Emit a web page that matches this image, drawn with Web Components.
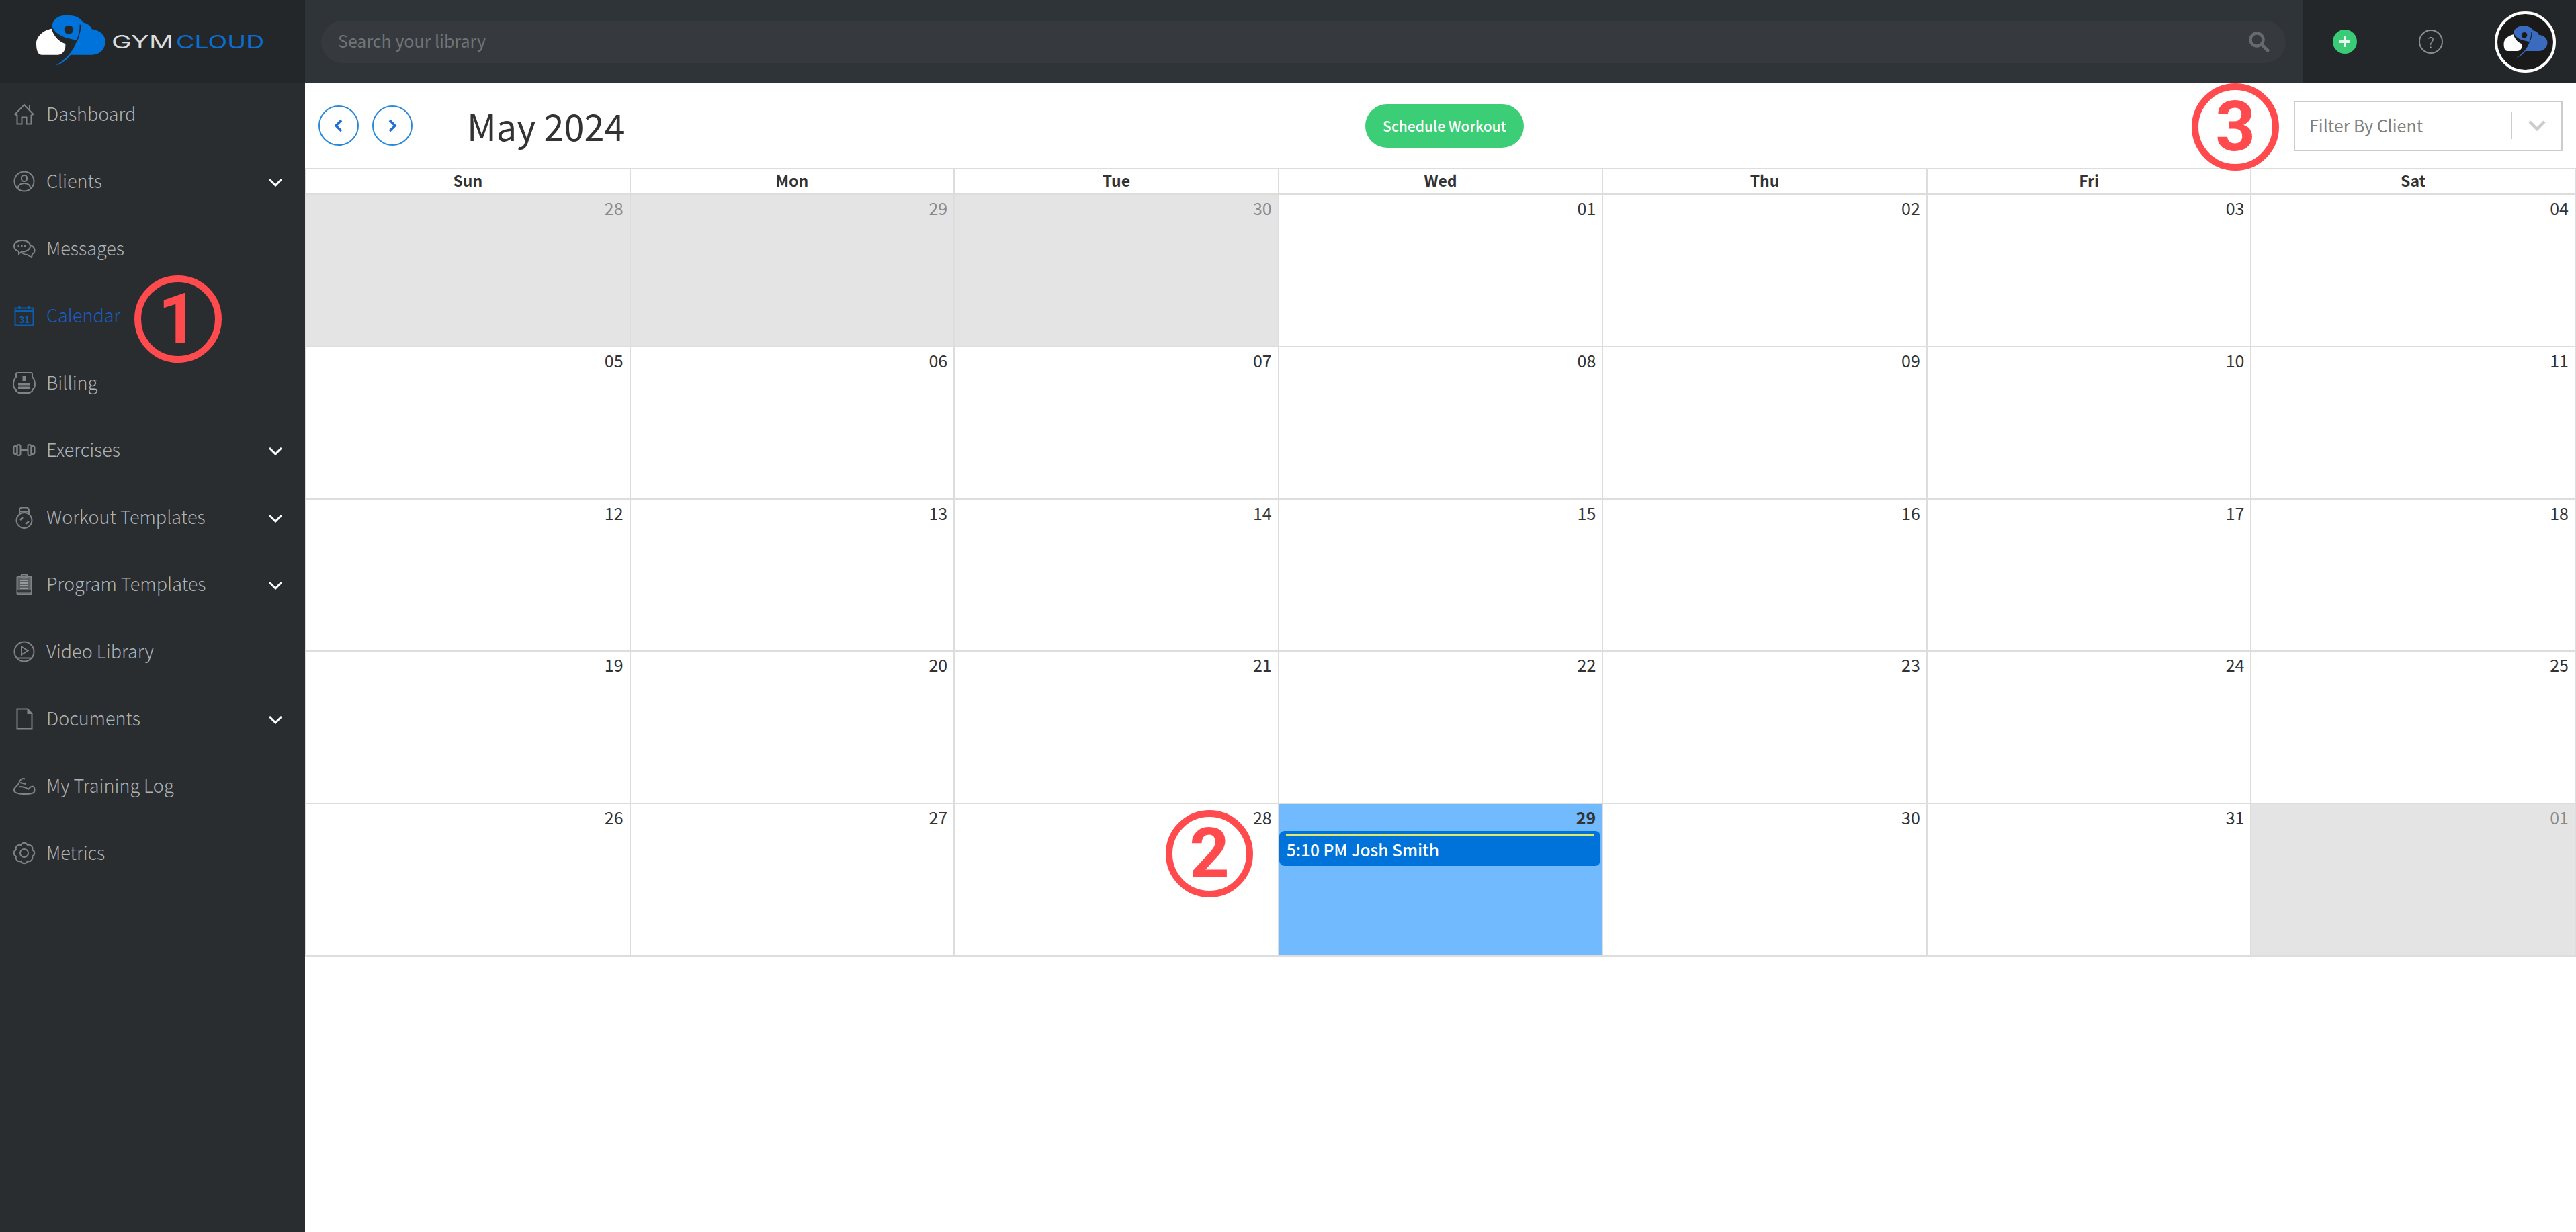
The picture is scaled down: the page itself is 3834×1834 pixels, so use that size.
<!DOCTYPE html>
<html lang="en">
<head>
<meta charset="utf-8">
<title>GymCloud Calendar</title>
<style>
html,body{margin:0;padding:0;background:#fff}
body{font-family:"Noto Sans CJK JP","Source Sans Pro","Noto Sans",sans-serif;color:#333}
</style>
</head>
<body>
<gc-app>
  <gc-topbar slot="top"></gc-topbar>
  <gc-sidebar slot="side">
    <gc-nav icon="home" label="Dashboard"></gc-nav>
    <gc-nav icon="user" label="Clients" chevron></gc-nav>
    <gc-nav icon="chat" label="Messages"></gc-nav>
    <gc-nav icon="calendar" label="Calendar" active></gc-nav>
    <gc-nav icon="billing" label="Billing"></gc-nav>
    <gc-nav icon="dumbbell" label="Exercises" chevron></gc-nav>
    <gc-nav icon="kettle" label="Workout Templates" chevron></gc-nav>
    <gc-nav icon="clipboard" label="Program Templates" chevron></gc-nav>
    <gc-nav icon="video" label="Video Library"></gc-nav>
    <gc-nav icon="doc" label="Documents" chevron></gc-nav>
    <gc-nav icon="arm" label="My Training Log"></gc-nav>
    <gc-nav icon="gear" label="Metrics"></gc-nav>
  </gc-sidebar>
  <gc-main slot="main"></gc-main>
  <gc-marker slot="over" n="1" x="200" y="410"></gc-marker>
  <gc-marker slot="over" n="2" x="1735" y="1206"></gc-marker>
  <gc-marker slot="over" n="3" x="3262" y="124"></gc-marker>
</gc-app>
<script>
const FONT='"Noto Sans CJK JP","Noto Sans",sans-serif';
const mark=(blue,white,hole)=>`
  <path fill="${white}" d="M110,98 C118,122 132,150 172,166 C174,190 165,212 140,215 L65,215 C50,215 42,195 42,165 C42,130 75,105 110,98 Z"/>
  <path fill="${blue}" d="M112,85 C118,50 150,36 185,38 C215,38 240,50 250,70 C270,75 285,85 290,100 C325,105 350,125 350,155 C350,190 325,215 290,215 L195,215 C175,240 155,255 130,262 C175,235 208,198 224,150 C205,145 185,143 165,135 C140,125 120,110 112,85 Z"/>
  <circle cx="187" cy="103" r="20" fill="${hole}"/>
  <path fill="none" stroke="${hole}" stroke-width="5" d="M238,80 C240,105 232,130 224,150"/>`;

const ICONS={
home:`<path d="M6.5,20 L20,6 L33.5,20 L30.5,21.5 V34.5 H23.5 V24.5 H16.5 V34.5 H9.5 V21.5 Z"/><path d="M28,12 V7"/>`,
user:`<circle cx="20" cy="20" r="14.5"/><rect x="16" y="11" width="8" height="9" rx="3.5"/><path d="M10.5,31 C11,25 15,23 20,23 C25,23 29,25 29.5,31"/>`,
chat:`<path d="M17,8 C10,8 5,11 5,16 C5,20 8,23 12,24 L12,27.5 L16,24.8 C23,25 29,21 29,16 C29,11 24,8 17,8Z"/><path d="M30,15 C34,17 36,20 35.5,24 C35,26 33.5,27.5 32,28 L31,33 L25,29 C22,29 19.5,28.3 17.5,27"/><path stroke-dasharray="2.5 2" d="M10.5,16 H24"/>`,
calendar:`<rect x="6.5" y="8.5" width="27" height="26"/><path stroke-width="3" d="M6.5,13.5 H33.5"/><path stroke-width="3" d="M13,5 V10 M27,5 V10"/><text x="20.5" y="30.5" text-anchor="middle" font-size="13" font-weight="700" fill="#0b5fb0" stroke="none" font-family='${FONT}'>31</text>`,
billing:`<path d="M10,5 H30 Q32,5 32,7 V11 C35,14 36,18 36,22 C36,26 34,29 32,30 V32 L28,35 H12 L8,32 V30 C6,29 4,26 4,22 C4,18 5,14 8,11 V7 Q8,5 10,5Z"/><rect x="17.5" y="10" width="5" height="7" fill="#7f8386" stroke="none"/><rect x="11" y="20" width="18" height="3.5" fill="#7f8386" stroke="none"/><rect x="11" y="25.5" width="18" height="3.5" fill="#7f8386" stroke="none"/>`,
dumbbell:`<rect x="4.5" y="14" width="5" height="12" rx="2.5"/><rect x="9.5" y="12" width="5" height="16" rx="2.5"/><rect x="25.5" y="12" width="5" height="16" rx="2.5"/><rect x="30.5" y="14" width="5" height="12" rx="2.5"/><path stroke-width="3.5" d="M14.5,20 H25.5"/>`,
kettle:`<circle cx="20" cy="24.5" r="11.5"/><path d="M13,16 V10 Q13,5.5 17,5.5 H23 Q27,5.5 27,10 V16"/><path d="M13,11.5 H27"/><path stroke-width="2.5" d="M14,24 L18,20 M22,30 L27,26"/>`,
clipboard:`<rect x="9.5" y="8.5" width="21" height="26" rx="1" fill="#5c6063"/><path stroke="#999" d="M14,14 H26 M14,18 H26 M14,22 H26 M14,26 H26"/><path stroke="#34383b" d="M10,30 H30"/><rect x="15.5" y="5.5" width="9" height="5" rx="2"/>`,
video:`<circle cx="20" cy="20" r="14.5"/><path d="M16,12.5 L25.5,18.5 L16,24.5 Z"/><path d="M10,29.5 H30"/>`,
doc:`<path d="M9.5,5.5 H25 L31.5,12.5 V34.5 H9.5 Z"/><path fill="#7f8386" stroke="none" d="M24.5,6 L31.5,13 H24.5 Z"/>`,
arm:`<path d="M21,9.5 C17,8 13,11 12,16 C10,21 4,22 5,27 C6,31.5 14,32 22,32 C30,32 36,31 35.5,26 C35.5,22.5 34,20.5 32,20.5 C29.5,20.5 28.5,23 26,25 C23,22 18,21 12,21"/><path d="M14,15 L22,17"/>`,
gear:`<path d="M32,15 A5.5,5.5 0 0 1 32,25 A5.5,5.5 0 0 1 25,32 A5.5,5.5 0 0 1 15,32 A5.5,5.5 0 0 1 8,25 A5.5,5.5 0 0 1 8,15 A5.5,5.5 0 0 1 15,8 A5.5,5.5 0 0 1 25,8 A5.5,5.5 0 0 1 32,15 Z"/><circle cx="20" cy="20" r="6"/>`
};

class Base extends HTMLElement{
  render(html){ this.attachShadow({mode:'open'}).innerHTML=html; }
}

customElements.define('gc-app',class extends Base{
  constructor(){super();this.render(`<style>
    :host{display:grid;position:relative;width:3834px;height:1834px;overflow:hidden;
      grid-template-columns:454px 1fr;grid-template-rows:124px 1fr;font-family:${FONT}}
    .top{grid-column:1/3}
    .side{background:#292d30}
    .main{min-width:0}
  </style>
  <div class="top"><slot name="top"></slot></div>
  <div class="side"><slot name="side"></slot></div>
  <div class="main"><slot name="main"></slot></div>
  <slot name="over"></slot>`);}
});

customElements.define('gc-logo',class extends Base{
  constructor(){super();this.render(`<style>:host{display:block;width:370px;height:100px}svg{display:block}</style>
  <svg width="370" height="100" viewBox="0 0 1110 300" role="img" aria-label="GymCloud">${mark('#0073da','#ffffff','#23272a')}
    <text y="186" font-family="Inter,sans-serif" font-size="80" font-weight="400"><tspan x="378" fill="#dcdcdc" textLength="276" lengthAdjust="spacingAndGlyphs">GYM</tspan><tspan x="666" fill="#0a6fd0" textLength="394" lengthAdjust="spacingAndGlyphs">CLOUD</tspan></text>
  </svg>`);}
});

customElements.define('gc-topbar',class extends Base{
  constructor(){super();this.render(`<style>
    :host{display:flex;height:124px;background:#2f3438}
    .brand{width:454px;flex:none;background:#23272a;box-sizing:border-box;padding:10px 0 0 40px}
    .search{flex:1;min-width:0;display:flex;align-items:center;padding:0 26px 0 24px}
    .actions{width:406px;flex:none;background:#23272a;display:flex;align-items:center;position:relative;box-sizing:border-box;padding-left:44px}
    .plus{width:36px;height:36px;border-radius:50%;background:#39cb75;display:grid;place-items:center;margin-top:-1px}
    .help{width:36px;height:36px;border-radius:50%;border:2px solid #8a8d8f;box-sizing:border-box;margin-left:92px;
      display:grid;place-items:center;color:#9a9da0;font-size:22px;line-height:1;font-weight:300}
    .avatar{margin-left:77px;width:91px;height:91px;box-sizing:border-box;border-radius:50%;border:4px solid #fff;background:#1a1a1a;display:grid;place-items:center}
  </style>
  <div class="brand"><gc-logo></gc-logo></div>
  <div class="search"><gc-search></gc-search></div>
  <div class="actions">
    <div class="plus"><svg width="18" height="18" viewBox="0 0 18 18"><path d="M9,1 V17 M1,9 H17" stroke="#e8f8ee" stroke-width="4"/></svg></div>
    <div class="help">?</div>
    <div class="avatar"><svg width="70" height="54" viewBox="30 26 332 246">${mark('#3b6bbf','#ffffff','#1a1a1a')}</svg></div>
  </div>`);}
});

customElements.define('gc-search',class extends Base{
  constructor(){super();this.render(`<style>
    :host{display:flex;align-items:center;width:100%;height:63px;background:#363a3e;border-radius:32px;box-sizing:border-box;padding:0 24px 0 25px;
      color:#6f7477;font-size:25px;line-height:36px}
    span{flex:1;margin-bottom:5px}
  </style><span>Search your library</span>
  <svg width="32" height="32" viewBox="0 0 32 32" fill="none" stroke="#666a6d"><circle cx="13" cy="13" r="9.5" stroke-width="4.5"/><path d="M20,20 L29,29" stroke-width="5" stroke-linecap="round"/></svg>`);}
});

customElements.define('gc-nav',class extends Base{
  constructor(){super();
    const active=this.hasAttribute('active');
    const col=active?'#0b5fb0':'#7f8386';
    this.render(`<style>
      :host{display:flex;align-items:center;height:92px;margin-bottom:8px;padding:0 34px 0 16px;box-sizing:border-box;
        color:${active?'#1a5cc0':'#aeb2b5'};font-size:27px;line-height:40px;font-weight:300}
      svg.i{flex:none;margin-right:13px}
      span{margin-bottom:2px}
      .c{margin-left:auto;margin-top:4px}
    </style>
    <svg class="i" width="40" height="40" viewBox="0 0 40 40" fill="none" stroke="${col}" stroke-width="2">${ICONS[this.getAttribute('icon')]}</svg>
    <span>${this.getAttribute('label')}</span>
    ${this.hasAttribute('chevron')?'<svg class="c" width="20" height="12" viewBox="0 0 20 12" fill="none" stroke="#fff" stroke-width="3"><path d="M1,1 L10,10 L19,1"/></svg>':''}`);
  }
});

customElements.define('gc-round-btn',class extends Base{
  constructor(){super();
    const d=this.getAttribute('dir')==='next'?'M8,4 L16,12 L8,20':'M16,4 L8,12 L16,20';
    this.render(`<style>:host{display:grid;place-items:center;width:60px;height:60px;box-sizing:border-box;border:2.5px solid #2a88dc;border-radius:50%;margin-right:20px}</style>
    <svg width="24" height="24" viewBox="0 0 24 24" fill="none" stroke="#1f6fd6" stroke-width="3.5"><path d="${d}"/></svg>`);
  }
});

customElements.define('gc-filter',class extends Base{
  constructor(){super();this.render(`<style>
    :host{display:flex;align-items:center;width:400px;height:75px;box-sizing:border-box;border:2px solid #ccc;background:#fff;color:#808080;font-size:25px;line-height:36px;padding-left:21px}
    span{flex:1;margin-bottom:2px}
    i{display:block;width:2px;height:40px;background:#ccc}
    .w{width:73px;display:grid;place-items:center}
  </style><span>Filter By Client</span><i></i><div class="w"><svg width="26" height="16" viewBox="0 0 26 16" fill="none" stroke="#ccc" stroke-width="4.5"><path d="M2,2 L13,13 L24,2"/></svg></div>`);}
});

customElements.define('gc-main',class extends Base{
  constructor(){super();this.render(`<style>
    :host{display:block}
    header{height:126px;box-sizing:border-box;display:grid;grid-template-columns:1fr auto 1fr;align-items:center;padding:0 20px}
    .l{display:flex;align-items:center}
    h1{margin:0 0 0 61px;font-size:54px;line-height:70px;font-weight:400;color:#333}
    .b{background:#3bce76;color:#fff;font-size:21px;line-height:32px;font-weight:500;height:65px;width:236px;border-radius:33px;display:grid;place-items:center;margin-left:12px}
    .r{justify-self:end}
  </style>
  <header>
    <div class="l"><gc-round-btn dir="prev"></gc-round-btn><gc-round-btn dir="next"></gc-round-btn><h1>May 2024</h1></div>
    <div class="b">Schedule Workout</div>
    <div class="r"><gc-filter></gc-filter></div>
  </header>
  <gc-calendar></gc-calendar>`);}
});

customElements.define('gc-day',class extends Base{
  constructor(){super();
    const muted=this.hasAttribute('muted'), today=this.hasAttribute('today');
    this.render(`<style>
      :host{display:block;box-sizing:border-box;min-width:0;border-left:2px solid #ddd;border-top:2px solid #ddd;
        background:${muted?'#e4e4e4':today?'#71bafe':'#fff'}}
      .n{display:block;text-align:right;padding:1px 9px 2px 0;font-size:25px;line-height:36px;
        color:${muted?'#8a8a8a':'#333'};font-weight:${today?700:400}}
      ::slotted(*){margin-top:1px}
    </style><span class="n">${this.getAttribute('n')}</span><slot></slot>`);
  }
});

customElements.define('gc-event',class extends Base{
  constructor(){super();this.render(`<style>
    :host{display:block;box-sizing:border-box;height:52px;margin-right:2px;background:#0073da;border-radius:8px;padding:4px 9px 0 10px;color:#fff;font-size:24.5px;line-height:34px;font-weight:500}
    i{display:block;height:4px;background:#e2e86e;margin-bottom:3px}
    span{margin-left:1px}
  </style><i></i><span><slot></slot></span>`);}
});

customElements.define('gc-calendar',class extends Base{
  constructor(){super();
    const heads=['Sun','Mon','Tue','Wed','Thu','Fri','Sat'].map(d=>`<div class="h">${d}</div>`).join('');
    const days=[];
    [28,29,30].forEach(n=>days.push([n,'muted']));
    for(let n=1;n<=31;n++)days.push([n,n===29?'today':'']);
    days.push([1,'muted']);
    const cells=days.map(([n,f])=>`<gc-day n="${String(n).padStart(2,'0')}" ${f}>${f==='today'?'<gc-event>5:10 PM Josh Smith</gc-event>':''}</gc-day>`).join('');
    this.render(`<style>
      :host{display:grid;grid-template-columns:repeat(7,1fr);grid-template-rows:38px repeat(5,226.8px);
        border-right:2px solid #ddd;border-bottom:2px solid #ddd;width:3380px;box-sizing:border-box}
      .h{border-left:2px solid #ddd;border-top:2px solid #ddd;text-align:center;font-size:23px;line-height:32px;font-weight:700;color:#333}
    </style>${heads}${cells}`);
  }
});

customElements.define('gc-marker',class extends Base{
  constructor(){super();
    this.render(`<style>
      :host{position:absolute;left:${this.getAttribute('x')}px;top:${this.getAttribute('y')}px;width:130px;height:130px;box-sizing:border-box;
        border:10px solid #ff4b4e;border-radius:50%;display:grid;place-items:center;color:#ff4b4e;
        font:700 104px/1 Roboto,sans-serif}
    </style>${this.getAttribute('n')}`);
  }
});
</script>
</body>
</html>
